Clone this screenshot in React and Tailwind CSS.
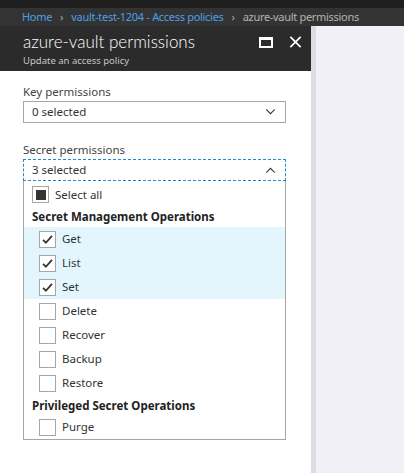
import React from 'react'

const font = { fontFamily: '"Noto Sans", "Open Sans", sans-serif' }

const Check = () => (
  <svg viewBox="0 0 16 16" className="w-[13px] h-[13px]">
    <path d="M2.5 8.5 L6 12 L13.5 3.5" fill="none" stroke="#333" strokeWidth="2.2" />
  </svg>
)

const Box = ({ checked }) => (
  <div className="w-[17px] h-[17px] border border-[#a6a6a6] bg-white flex items-center justify-center">
    {checked && <Check />}
  </div>
)

const Row = ({ label, checked }) => (
  <div className="h-6 flex items-center pl-[15px] gap-[6px] text-[11.5px] text-[#333]">
    <Box checked={checked} />
    <span>{label}</span>
  </div>
)

const Chevron = ({ up }) => (
  <svg viewBox="0 0 12 7" className="w-[11px] h-[6px]">
    <path d={up ? 'M1 6.5 L6 1.5 L11 6.5' : 'M1 0.5 L6 5.5 L11 0.5'} fill="none" stroke="#333" strokeWidth="1.2" />
  </svg>
)

const App = () => {
  return (
    <div className="w-[404px] h-[473px] overflow-hidden flex flex-col bg-[#f0f0f6]" style={font}>
      <div className="h-2 bg-[#1e1e1e]" />
      <div className="h-[18px] bg-[#333333] flex items-center pl-[22px] gap-[8px] text-[11px] tracking-[-0.3px]">
        <span className="text-[#4aa0e6]">Home</span>
        <span className="text-[#aaa]">›</span>
        <span className="text-[#4aa0e6]">vault-test-1204 - Access policies</span>
        <span className="text-[#aaa]">›</span>
        <span className="text-[#b4b4b4]">azure-vault permissions</span>
      </div>
      <div className="flex flex-1 min-h-0">
        <div className="w-[311px] bg-white flex flex-col">
          <div className="h-[45px] bg-[#2b2b2b] flex pl-[23px] pr-[9px]">
            <div className="flex-1 flex flex-col pt-[3px]">
              <div className="text-[17px] font-light text-white leading-[26px]" style={{ fontFamily: 'Lato, "Noto Sans", sans-serif' }}>azure-vault permissions</div>
              <div className="text-[9.5px] text-[#c8c8c8] leading-[12px]">Update an access policy</div>
            </div>
            <div className="flex items-start gap-[16px] pt-[10px]">
              <div className="w-[14px] h-[11px] border-2 border-white border-t-[3px] mt-[1px]" />
              <svg viewBox="0 0 14 14" className="w-[13px] h-[12px]">
                <path d="M1 1 L13 13 M13 1 L1 13" stroke="#fff" strokeWidth="2" />
              </svg>
            </div>
          </div>
          <div className="pl-[23px] pr-[25px] pt-[13px]">
            <div className="text-[11.5px] text-[#444] leading-[16px]">Key permissions</div>
            <div className="mt-[1px] h-[22px] border border-[#a6a6a6] flex items-center justify-between pl-[8px] pr-[9px] text-[11.5px] text-[#333]">
              <span>0 selected</span>
              <Chevron />
            </div>
            <div className="mt-[19px] text-[11.5px] text-[#444] leading-[16px]">Secret permissions</div>
            <div className="mt-[1px] h-[22px] border border-dashed border-[#1f8ad2] flex items-center justify-between pl-[8px] pr-[9px] text-[11.5px] text-[#333]">
              <span>3 selected</span>
              <Chevron up />
            </div>
            <div className="border border-t-0 border-[#a6a6a6]">
              <div className="h-[26px] flex items-center pl-[8px] gap-[6px] text-[11.5px] text-[#333] pt-[1px]">
                <div className="w-[17px] h-[17px] border border-[#a6a6a6] flex items-center justify-center">
                  <div className="w-[10px] h-[10px] bg-[#333]" />
                </div>
                <span>Select all</span>
              </div>
              <div className="h-[20px] flex items-center pl-[8px] text-[11.5px] font-bold text-[#222]">Secret Management Operations</div>
              <div className="bg-[#e3f6fd]">
                <Row label="Get" checked />
                <Row label="List" checked />
                <Row label="Set" checked />
              </div>
              <Row label="Delete" />
              <Row label="Recover" />
              <Row label="Backup" />
              <Row label="Restore" />
              <div className="h-[20px] flex items-center pl-[8px] text-[11.5px] font-bold text-[#222] pt-[2px]">Privileged Secret Operations</div>
              <Row label="Purge" />
            </div>
          </div>
        </div>
        <div className="w-[5px] bg-[#dcdce3]" />
        <div className="flex-1" />
      </div>
    </div>
  )
}

export default App
